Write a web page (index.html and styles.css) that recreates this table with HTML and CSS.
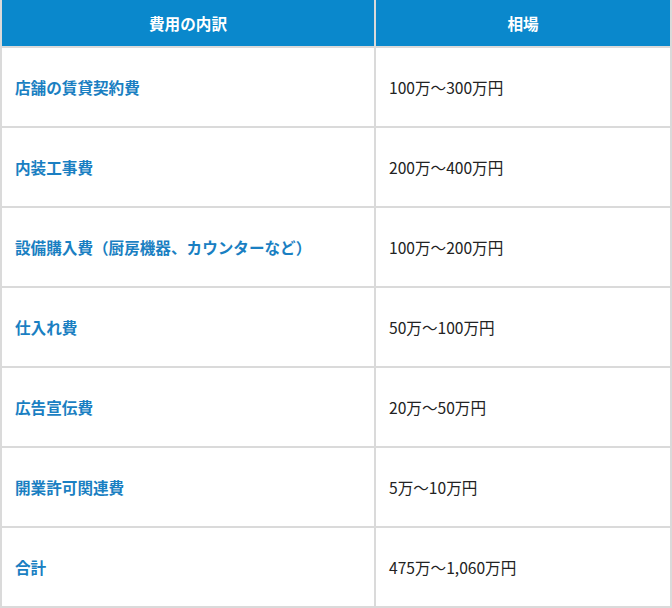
FILE: index.html
```html
<!DOCTYPE html>
<html lang="ja">
<head>
<meta charset="utf-8">
<link rel="stylesheet" href="styles.css">
</head>
<body>
<table class="cost">
  <thead>
    <tr><th class="c1">費用の内訳</th><th class="c2">相場</th></tr>
  </thead>
  <tbody>
    <tr><td class="item">店舗の賃貸契約費</td><td class="price">100万～300万円</td></tr>
    <tr><td class="item">内装工事費</td><td class="price">200万～400万円</td></tr>
    <tr><td class="item">設備購入費（厨房機器、カウンターなど）</td><td class="price">100万～200万円</td></tr>
    <tr><td class="item">仕入れ費</td><td class="price">50万～100万円</td></tr>
    <tr><td class="item">広告宣伝費</td><td class="price">20万～50万円</td></tr>
    <tr><td class="item">開業許可関連費</td><td class="price">5万～10万円</td></tr>
    <tr><td class="item">合計</td><td class="price">475万～1,060万円</td></tr>
  </tbody>
</table>
</body>
</html>
```
FILE: styles.css
```css
html, body {
  margin: 0;
  padding: 0;
  background: #fff;
}
body {
  font-family: "Noto Sans CJK JP", "Noto Sans", sans-serif;
  font-size: 15.6px;
  color: #222;
}
.cost {
  width: 672px;
  border-collapse: collapse;
  table-layout: fixed;
}
.cost th, .cost td {
  border: 2px solid #dadada;
  vertical-align: middle;
}
.c1 { width: 372px; }
.cost th {
  background: #0a88cc;
  color: #fff;
  font-weight: 700;
  height: 46px;
  padding: 0;
  text-align: center;
  border-top: none;
}
.cost th + th {
  border-left: 2px solid #7ab9e0;
}
.cost thead th {
  border-bottom: 2px solid #dadada;
}
.cost td {
  height: 78px;
  padding: 0 13px;
}
.item {
  color: #1a7fc2;
  font-weight: 700;
}
.price {
  color: #222;
}
```
